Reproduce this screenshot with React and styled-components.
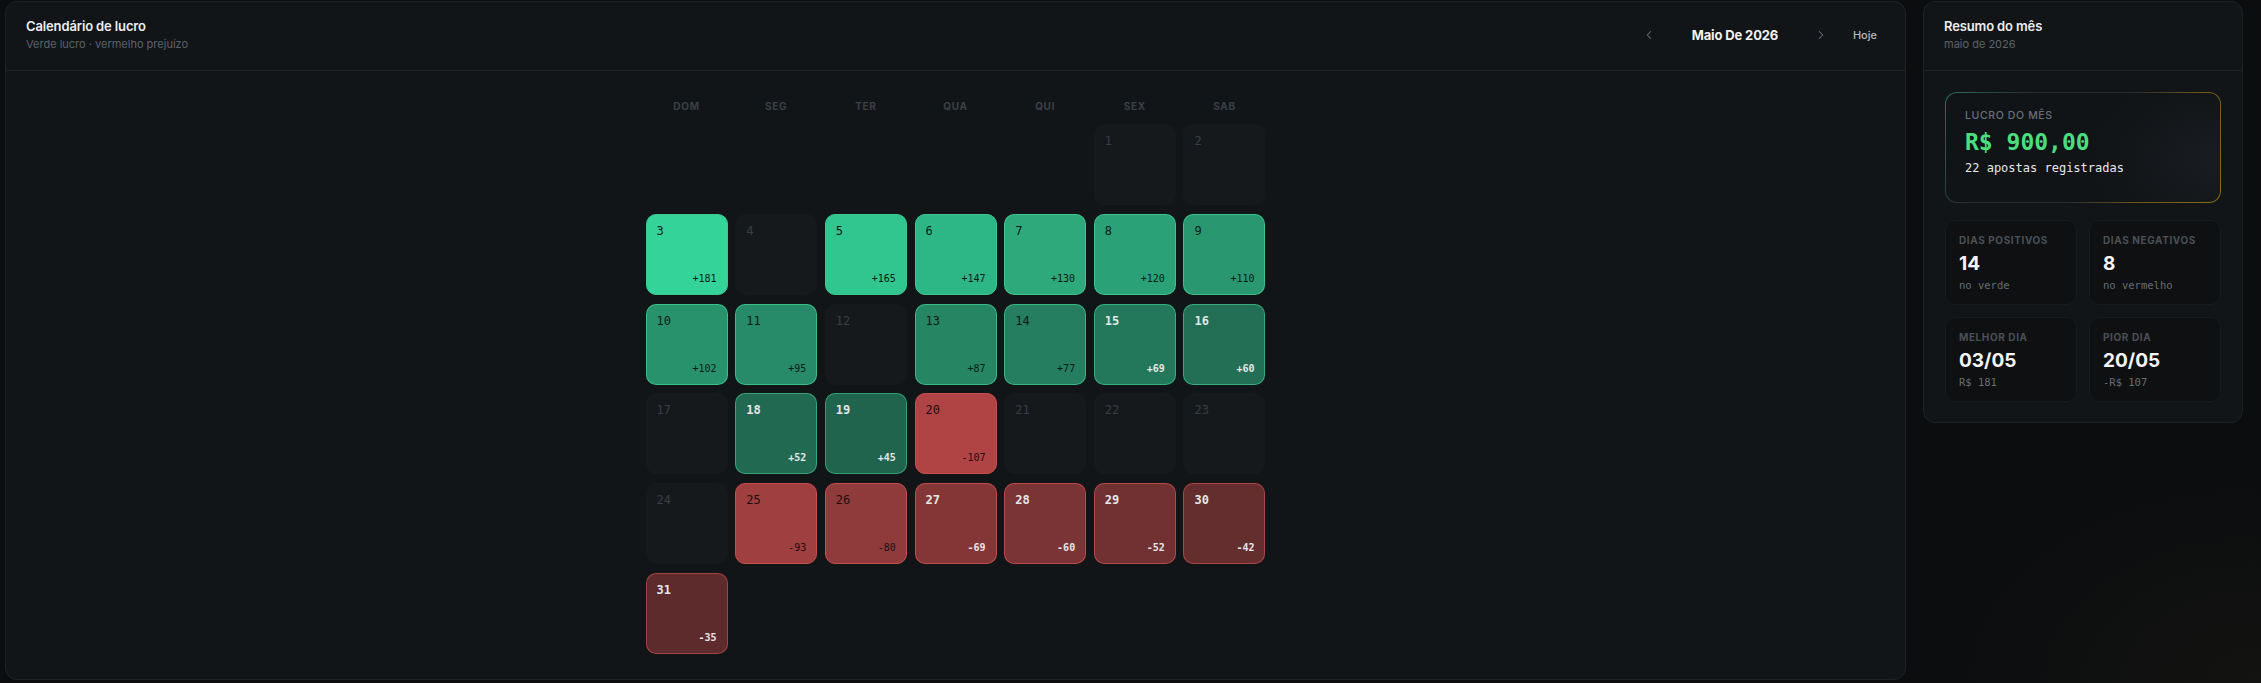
import React from 'react';
import styled, { createGlobalStyle } from 'styled-components';
import { ChevronLeft, ChevronRight } from 'lucide-react';

const GlobalStyle = createGlobalStyle`
  html, body {
    margin: 0;
    padding: 0;
    background: #0b0d0f;
  }
  body {
    font-family: Inter, "Noto Sans", sans-serif;
    color: #e8eaed;
  }
  * {
    box-sizing: border-box;
  }
`;

const MONO = '"DejaVu Sans Mono", "Liberation Mono", monospace';

const Page = styled.div`
  display: flex;
  align-items: flex-start;
  gap: 17px;
  height: 683px;
  padding: 1px 18px 0 5px;
  background:
    radial-gradient(ellipse 480px 320px at 100% 100%, rgba(140, 115, 40, 0.06), transparent 70%),
    #0b0d0f;
`;

const Panel = styled.section`
  background: #121518;
  border: 1px solid #1e2226;
  border-radius: 12px;
  display: flex;
  flex-direction: column;
`;

const CalendarPanel = styled(Panel)`
  flex: 1;
  height: 679px;
`;

const SummaryPanel = styled(Panel)`
  width: 320px;
  flex-shrink: 0;
`;

const PanelHeader = styled.header`
  height: 69px;
  flex-shrink: 0;
  padding: 0 20px;
  border-bottom: 1px solid #1e2226;
  display: flex;
  align-items: center;
  justify-content: space-between;
`;

const TitleBlock = styled.div`
  display: flex;
  flex-direction: column;
  gap: 3px;
  margin-top: -4px;
`;

const Title = styled.h2`
  margin: 0;
  font-size: 13px;
  font-weight: 600;
  line-height: 16px;
  color: #eceef0;
  letter-spacing: -0.01em;
`;

const Subtitle = styled.span`
  font-size: 11px;
  line-height: 14px;
  color: #5c626a;
`;

const MonthNav = styled.div`
  display: flex;
  align-items: center;
  margin-top: -3px;
`;

const NavButton = styled.button`
  width: 28px;
  height: 28px;
  border: 0;
  background: transparent;
  color: #6b7078;
  display: flex;
  align-items: center;
  justify-content: center;
  padding: 0;
  cursor: pointer;
`;

const MonthLabel = styled.span`
  width: 144px;
  text-align: center;
  font-size: 13px;
  font-weight: 700;
  color: #f1f2f4;
  letter-spacing: -0.01em;
`;

const TodayButton = styled.button`
  border: 0;
  background: transparent;
  font-family: Inter, sans-serif;
  font-size: 11px;
  font-weight: 500;
  color: #b4b8be;
  padding: 4px 8px;
  margin-left: 10px;
  cursor: pointer;
`;

const CalendarBody = styled.div`
  flex: 1;
  display: flex;
  flex-direction: column;
  align-items: center;
  padding-top: 28px;
`;

const WeekHeader = styled.div`
  display: grid;
  grid-template-columns: repeat(7, 82px);
  column-gap: 7.67px;
  margin-bottom: 11px;
`;

const Weekday = styled.div`
  text-align: center;
  font-size: 10px;
  font-weight: 700;
  letter-spacing: 0.07em;
  line-height: 14px;
  color: #3b4047;
`;

const DayGrid = styled.div`
  display: grid;
  grid-template-columns: repeat(7, 82px);
  grid-auto-rows: 81px;
  column-gap: 7.67px;
  row-gap: 8.8px;
`;

const Cell = styled.div`
  border-radius: 10px;
  padding: 8px 10px 8px 10px;
  display: flex;
  flex-direction: column;
  justify-content: space-between;
  font-family: ${MONO};
  background: ${(p) => p.$fill || '#16191c'};
  border: 1px solid ${(p) => p.$edge || '#16191c'};
  color: ${(p) => p.$ink || '#3a3e44'};
`;

const Blank = styled.div``;

const DayNum = styled.span`
  font-size: 12px;
  line-height: 16px;
  font-weight: ${(p) => (p.$strong ? 700 : 400)};
`;

const DayValue = styled.span`
  align-self: flex-end;
  font-size: 10px;
  line-height: 14px;
  font-weight: ${(p) => (p.$strong ? 700 : 400)};
`;

const SummaryBody = styled.div`
  padding: 21px 21px 20px 21px;
  display: flex;
  flex-direction: column;
  gap: 17px;
`;

const ProfitCard = styled.div`
  height: 111px;
  border-radius: 12px;
  border: 1px solid transparent;
  padding: 16px 19px;
  background:
    radial-gradient(ellipse 180px 120px at 100% 60%, rgba(40, 44, 48, 0.35), transparent 70%) padding-box,
    linear-gradient(#111417, #111417) padding-box,
    linear-gradient(120deg, #2b7256 0%, #282c31 25%, #282c31 55%, #6e5718 75%, #8c6c18 100%) border-box;
  display: flex;
  flex-direction: column;
`;

const CardLabel = styled.span`
  font-size: 10.5px;
  font-weight: 500;
  letter-spacing: 0.06em;
  color: #697078;
  line-height: 14px;
`;

const ProfitValue = styled.span`
  font-family: ${MONO};
  font-size: 23px;
  font-weight: 700;
  color: #4ade80;
  line-height: 30px;
  margin-top: 4px;
`;

const ProfitNote = styled.span`
  font-family: ${MONO};
  font-size: 12px;
  color: #e6e8ea;
  margin-top: 3px;
  line-height: 16px;
`;

const StatGrid = styled.div`
  display: grid;
  grid-template-columns: 1fr 1fr;
  gap: 12px;
`;

const StatCard = styled.div`
  height: 85px;
  background: #0e1012;
  border: 1px solid #181b1e;
  border-radius: 10px;
  padding: 13px 13px;
  display: flex;
  flex-direction: column;
`;

const StatLabel = styled.span`
  font-size: 10px;
  font-weight: 700;
  letter-spacing: 0.06em;
  color: #4a5058;
  line-height: 13px;
`;

const StatValue = styled.span`
  font-size: 19px;
  font-weight: 700;
  color: #f4f5f6;
  line-height: 22px;
  margin-top: 6px;
`;

const StatSub = styled.span`
  font-family: ${MONO};
  font-size: 10.5px;
  color: #676d74;
  line-height: 14px;
  margin-top: 3px;
`;

const weekdays = ['DOM', 'SEG', 'TER', 'QUA', 'QUI', 'SEX', 'SAB'];

const results = {
  3: 181, 5: 165, 6: 147, 7: 130, 8: 120, 9: 110, 10: 102, 11: 95,
  13: 87, 14: 77, 15: 69, 16: 60, 18: 52, 19: 45, 20: -107,
  25: -93, 26: -80, 27: -69, 28: -60, 29: -52, 30: -42, 31: -35,
};

const maxGain = 181;
const maxLoss = 107;

const cellTone = (value) => {
  if (value === undefined) return {};
  const gain = value > 0;
  const ratio = Math.abs(value) / (gain ? maxGain : maxLoss);
  const alpha = 0.22 + 0.78 * ratio;
  const rgb = gain ? '52, 211, 153' : '176, 68, 68';
  const edge = Math.min(1, alpha + 0.2);
  const edgeRgb = gain ? '62, 200, 145' : '200, 78, 78';
  const dark = gain ? ratio > 0.4 : ratio > 0.7;
  return {
    fill: `rgba(${rgb}, ${alpha.toFixed(3)})`,
    edge: `rgba(${edgeRgb}, ${edge.toFixed(3)})`,
    ink: dark ? (gain ? '#0d1a14' : '#1c0e0f') : '#e4e6e8',
    strong: !dark,
  };
};

const DayCell = ({ day }) => {
  const value = results[day];
  const tone = cellTone(value);
  return (
    <Cell $fill={tone.fill} $edge={tone.edge} $ink={tone.ink}>
      <DayNum $strong={tone.strong}>{day}</DayNum>
      {value !== undefined && (
        <DayValue $strong={tone.strong}>
          {value > 0 ? `+${value}` : value}
        </DayValue>
      )}
    </Cell>
  );
};

const stats = [
  { label: 'DIAS POSITIVOS', value: '14', sub: 'no verde' },
  { label: 'DIAS NEGATIVOS', value: '8', sub: 'no vermelho' },
  { label: 'MELHOR DIA', value: '03/05', sub: 'R$ 181' },
  { label: 'PIOR DIA', value: '20/05', sub: '-R$ 107' },
];

const App = () => {
  const leading = 5; // maio de 2026 começa numa sexta
  const days = Array.from({ length: 31 }, (_, i) => i + 1);

  return (
    <>
      <GlobalStyle />
      <Page>
        <CalendarPanel>
          <PanelHeader>
            <TitleBlock>
              <Title>Calendário de lucro</Title>
              <Subtitle>Verde lucro · vermelho prejuízo</Subtitle>
            </TitleBlock>
            <MonthNav>
              <NavButton aria-label="Mês anterior">
                <ChevronLeft size={14} strokeWidth={1.75} />
              </NavButton>
              <MonthLabel>Maio De 2026</MonthLabel>
              <NavButton aria-label="Próximo mês">
                <ChevronRight size={14} strokeWidth={1.75} />
              </NavButton>
              <TodayButton>Hoje</TodayButton>
            </MonthNav>
          </PanelHeader>
          <CalendarBody>
            <WeekHeader>
              {weekdays.map((w) => (
                <Weekday key={w}>{w}</Weekday>
              ))}
            </WeekHeader>
            <DayGrid>
              {Array.from({ length: leading }, (_, i) => (
                <Blank key={`b${i}`} />
              ))}
              {days.map((d) => (
                <DayCell key={d} day={d} />
              ))}
            </DayGrid>
          </CalendarBody>
        </CalendarPanel>

        <SummaryPanel>
          <PanelHeader>
            <TitleBlock>
              <Title>Resumo do mês</Title>
              <Subtitle>maio de 2026</Subtitle>
            </TitleBlock>
          </PanelHeader>
          <SummaryBody>
            <ProfitCard>
              <CardLabel>LUCRO DO MÊS</CardLabel>
              <ProfitValue>R$ 900,00</ProfitValue>
              <ProfitNote>22 apostas registradas</ProfitNote>
            </ProfitCard>
            <StatGrid>
              {stats.map((s) => (
                <StatCard key={s.label}>
                  <StatLabel>{s.label}</StatLabel>
                  <StatValue>{s.value}</StatValue>
                  <StatSub>{s.sub}</StatSub>
                </StatCard>
              ))}
            </StatGrid>
          </SummaryBody>
        </SummaryPanel>
      </Page>
    </>
  );
};

export default App;
